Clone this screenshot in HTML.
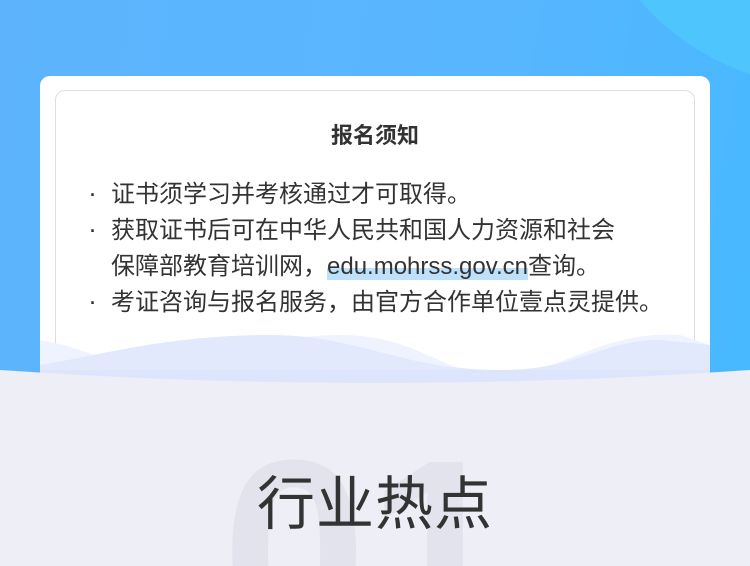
<!DOCTYPE html>
<html style="overflow:hidden;width:750px;height:566px"><head><meta charset="utf-8"><style>
*{margin:0;padding:0;box-sizing:border-box}
body{width:750px;height:566px;overflow:hidden;position:relative;background:#5bb5fd;font-family:"Liberation Sans","Noto Sans CJK SC",sans-serif}
#w{position:absolute;left:0;top:0;width:750px;height:566px;overflow:hidden}
.bg{position:absolute;left:0;top:0;width:750px;height:400px;background:linear-gradient(100deg,#5db4fd 0%,#58b6fe 60%,#47b8ff 100%)}
.card{position:absolute;left:40px;top:76px;width:670px;height:310px;background:#fff;border-radius:10px}
.inner{position:absolute;left:55px;top:90px;width:640px;height:290px;border:1px solid #dedede;border-radius:10px}
.title{position:absolute;left:0;width:750px;top:118px;text-align:center;font-size:22px;font-weight:bold;color:#333}
.li{position:absolute;left:90px;font-size:24px;color:#333;white-space:nowrap;line-height:30px}
.li b{font-weight:bold;display:inline-block;width:21px;font-size:18px;vertical-align:top}
.hl{background:linear-gradient(#fff 0,#fff 55%,#bde0fb 55%)}
.hot{position:absolute;left:0;width:750px;text-align:center;top:474px;font-size:58px;color:#333;letter-spacing:1px;line-height:62px}
</style></head><body><div id="w">
<div class="bg"></div>
<svg style="position:absolute;left:550px;top:0" width="200" height="120"><ellipse cx="295" cy="-120" rx="250" ry="210" fill="#4fc6fd" opacity=".9"/></svg>
<div class="card"></div><div class="inner"></div>
<svg style="position:absolute;left:40px;top:325px" width="670" height="60">
<path d="M0 15 C60 25 80 50 120 45 C200 35 220 10 300 10 C380 10 400 50 460 50 C520 50 560 5 640 10 L670 20 L670 60 L0 60Z" fill="#eef3fe"/>
<path d="M0 40 C60 30 130 10 230 10 C320 10 360 45 460 45 C540 45 560 15 620 15 L670 20 L670 60 L0 60Z" fill="#e2e9fd"/>
<rect x="0" y="45" width="670" height="15" fill="#dbe3fd" opacity=".6"/>
</svg>
<div class="title">报名须知</div>
<div class="li" style="top:180px"><b>·</b>证书须学习并考核通过才可取得。</div>
<div class="li" style="top:216px"><b>·</b>获取证书后可在中华人民共和国人力资源和社会</div>
<div class="li" style="top:252px"><b></b>保障部教育培训网，<span class="hl">edu.mohrss.gov.cn</span>查询。</div>
<div class="li" style="top:288px"><b>·</b>考证咨询与报名服务，由官方合作单位壹点灵提供。</div>
<svg style="position:absolute;left:0;top:366px" width="750" height="200">
<path d="M0 4 Q375 30 750 4 L750 200 L0 200Z" fill="#edeef6"/>
<text x="222" y="275" font-family="Liberation Sans" font-weight="bold" font-size="260" fill="#e2e3ed">01</text>
</svg>
<div class="hot">行业热点</div>
</div></body></html>
